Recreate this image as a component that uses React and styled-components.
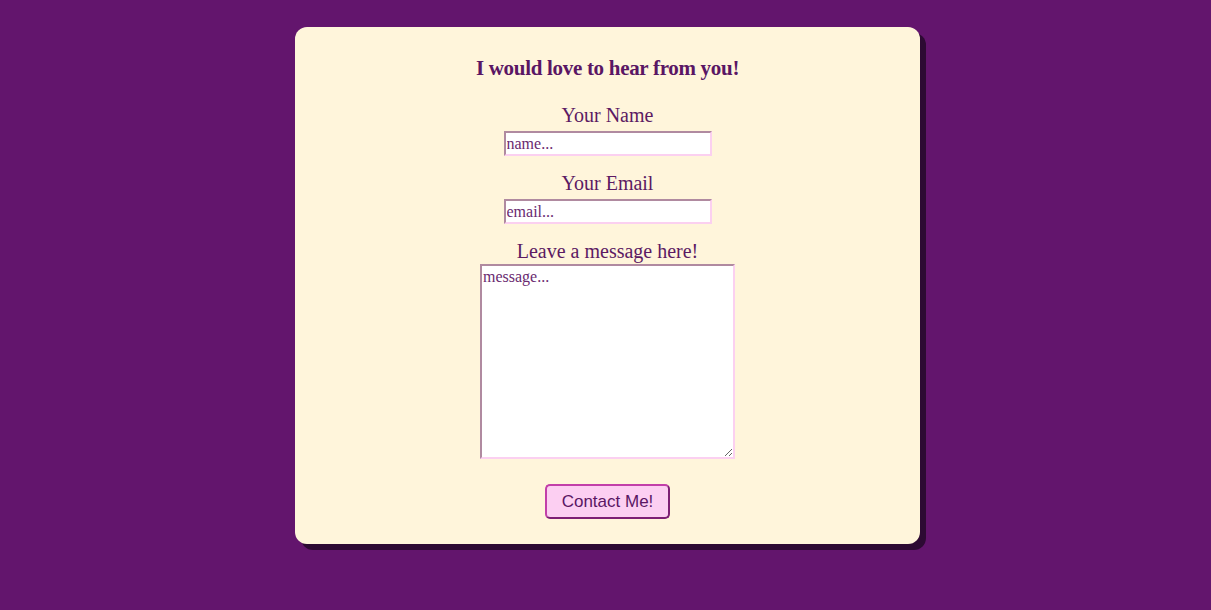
import React from "react";
import styled, { createGlobalStyle } from "styled-components";

const Global = createGlobalStyle`
  html, body { margin: 0; padding: 0; background: #63156d; }
  body { font-family: "Liberation Serif", "Times New Roman", serif; }
`;

const Page = styled.div`
  min-height: 610px;
  padding: 27px 0 0 4px;
  box-sizing: border-box;
`;

const Card = styled.form`
  width: 625px;
  height: 517px;
  margin: 0 auto;
  box-sizing: border-box;
  background: #fff5db;
  border-radius: 12px;
  box-shadow: 6px 6px 0 #2d0a33;
  display: flex;
  flex-direction: column;
  align-items: center;
  padding-top: 27px;
  color: #5c1a63;
`;

const Heading = styled.h2`
  margin: 0 0 21px;
  font-size: 21px;
  line-height: 28px;
  font-weight: bold;
  letter-spacing: -0.3px;
  color: #5a1664;
`;

const Field = styled.div`
  display: flex;
  flex-direction: column;
  align-items: center;
  margin-bottom: ${(p) => p.$gap ?? 15}px;
`;

const Label = styled.label`
  font-size: 20px;
  line-height: 24px;
  margin-bottom: ${(p) => p.$space ?? 4}px;
  color: #5c1a63;
`;

const fieldBorder = `
  border-style: solid;
  border-width: 2px;
  border-color: #b08aa0 #fbd0f0 #fbd0f0 #b08aa0;
  background: #ffffff;
  box-sizing: border-box;
  font-family: "Liberation Serif", "Times New Roman", serif;
  color: #5c1a63;
  outline: none;
  &::placeholder { color: #6a2a70; opacity: 1; }
`;

const Input = styled.input`
  ${fieldBorder}
  display: block;
  width: 208px;
  height: 25px;
  padding: 0 1px;
  font-size: 16px;
`;

const TextArea = styled.textarea`
  ${fieldBorder}
  display: block;
  width: 255px;
  height: 195px;
  padding: 2px 1px;
  font-size: 16px;
  resize: both;
`;

const Button = styled.button`
  width: 125px;
  height: 35px;
  margin-top: 25px;
  background: #fccff2;
  border: 2px solid;
  border-color: #c23fa9 #7d1f74 #7d1f74 #c23fa9;
  border-radius: 5px;
  font-family: "Liberation Sans", Arial, sans-serif;
  font-size: 17px;
  color: #5a1664;
  cursor: pointer;
`;

export default function App() {
  return (
    <>
      <Global />
      <Page>
        <Card onSubmit={(e) => e.preventDefault()}>
          <Heading>I would love to hear from you!</Heading>
          <Field>
            <Label htmlFor="name">Your Name</Label>
            <Input id="name" placeholder="name..." />
          </Field>
          <Field $gap={15}>
            <Label htmlFor="email">Your Email</Label>
            <Input id="email" placeholder="email..." />
          </Field>
          <Field $gap={0}>
            <Label htmlFor="msg" $space={1}>Leave a message here!</Label>
            <TextArea id="msg" placeholder="message..." />
          </Field>
          <Button type="submit">Contact Me!</Button>
        </Card>
      </Page>
    </>
  );
}
